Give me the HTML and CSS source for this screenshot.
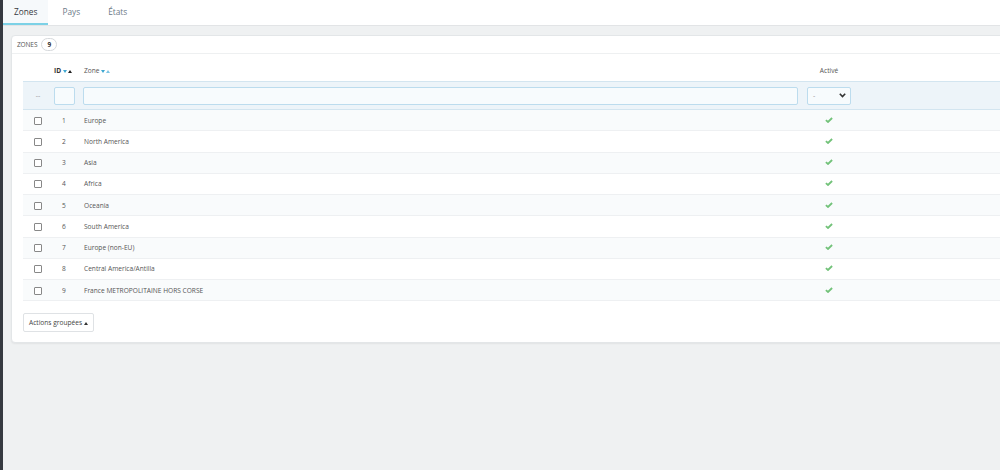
FILE: index.html
```html
<!DOCTYPE html>
<html lang="fr">
    <head>
        <meta charset="UTF-8">
        <meta name="viewport" content="width=device-width, initial-scale=1.0">
        <title>Zones</title>
        <link rel="stylesheet" href="styles.css">
    </head>
<body>
    <div class="sidebar-edge"></div>
    <div class="main">
        <nav class="tabs">
            <a class="tab active">Zones</a>
            <a class="tab">Pays</a>
            <a class="tab">États</a>
        </nav>

        <div class="content">
            <div class="panel">
                <div class="panel-heading">
                    ZONES <span class="badge">9</span>
                </div>

                <table class="list">
                    <colgroup>
                        <col class="w-check">
                        <col class="w-id">
                        <col class="w-zone">
                        <col class="w-active">
                        <col class="w-rest">
                    </colgroup>
                    <thead>
                        <tr class="titles">
                            <th></th>
                            <th class="col-id">ID <span class="sort"><i class="down"></i><i class="up dark"></i></span></th>
                            <th class="col-zone">Zone <span class="sort"><i class="down"></i><i class="up"></i></span></th>
                            <th class="col-active">Activé</th>
                            <th></th>
                        </tr>
                        <tr class="filters">
                            <th class="col-check dash">--</th>
                            <th class="col-id"><input type="text" class="filter small"></th>
                            <th class="col-zone"><input type="text" class="filter"></th>
                            <th class="col-active">
                                <div class="select">-
                                    <svg width="7" height="5" viewBox="0 0 7 5"><path d="M0.8 0.8 L3.5 3.6 L6.2 0.8" fill="none" stroke="#333" stroke-width="1.6"/></svg>
                                </div>
                            </th>
                            <th></th>
                        </tr>
                    </thead>
                    <tbody id="rows"></tbody>
                </table>

                <button class="bulk">Actions groupées <span class="caret"></span></button>
            </div>
        </div>
    </div>

    <script>
        const zones = [
            'Europe', 'North America', 'Asia', 'Africa', 'Oceania',
            'South America', 'Europe (non-EU)', 'Central America/Antilla',
            'France METROPOLITAINE HORS CORSE'
        ];
        const tbody = document.getElementById('rows');

        zones.forEach(function (name, i) {
            const row = document.createElement('tr');
            row.innerHTML = `
                <td class="col-check"><span class="box"></span></td>
                <td class="col-id">${i + 1}</td>
                <td class="col-zone">${name}</td>
                <td class="col-active">
                    <svg width="8" height="6" viewBox="0 0 8 6"><path d="M0.9 3.1 L3 5 L7.1 1" fill="none" stroke="#72c279" stroke-width="1.8"/></svg>
                </td>
                <td></td>
            `;
            tbody.appendChild(row);
        });
    </script>
</body>
</html>
```

FILE: styles.css
```css
body {
    margin: 0;
    font-family: 'Open Sans', sans-serif;
    background-color: #eff1f2;
    color: #555;
    display: flex;
    height: 470px;
    overflow: hidden;
}

.sidebar-edge {
    width: 3px;
    background-color: #363a41;
    flex-shrink: 0;
}

.main {
    flex: 1;
    min-width: 0;
    overflow: hidden;
}

/* tab bar */
.tabs {
    display: flex;
    height: 26px;
    background-color: #fff;
    border-bottom: 1px solid #e2e4e6;
    box-sizing: border-box;
}

.tab {
    display: flex;
    align-items: center;
    padding: 0 11px;
    font-size: 8.3px;
    color: #6c7a87;
    border-bottom: 2px solid transparent;
    margin-right: 6px;
}

.tab.active {
    color: #363a41;
    background-color: #f6f9fb;
    border-bottom-color: #7cd1e6;
    margin-right: 3px;
}

.content {
    padding: 9px 0 0 8px;
}

/* panel */
.panel {
    width: 1080px;
    background-color: #fff;
    border: 1px solid #e3e6e8;
    border-radius: 4px;
    box-shadow: 0 1px 2px rgba(0, 0, 0, 0.06);
    padding: 0 11px 10px;
    box-sizing: border-box;
}

.panel-heading {
    height: 17px;
    display: flex;
    align-items: center;
    gap: 4px;
    font-size: 6.5px;
    letter-spacing: -0.1px;
    color: #555;
    border-bottom: 1px solid #eef0f1;
    margin: 0 -11px 0;
    padding: 0 5px;
}

.badge {
    display: inline-flex;
    align-items: center;
    justify-content: center;
    width: 14px;
    height: 11px;
    border: 1px solid #d6d9dc;
    border-radius: 7px;
    font-weight: bold;
    font-size: 6.5px;
    color: #333;
}

/* table */
.list {
    width: 100%;
    table-layout: fixed;
    border-collapse: collapse;
    margin-top: 10px;
    font-size: 6.6px;
    color: #555;
}

.w-check { width: 28px; }
.w-id { width: 30px; }
.w-zone { width: 724px; }
.w-active { width: 48px; }

.list th,
.list td {
    padding: 0;
    font-weight: normal;
    text-align: left;
}

.titles th {
    height: 15px;
    padding-top: 2px;
    vertical-align: top;
    color: #555;
}

.col-check {
    text-align: center !important;
    padding-left: 2px !important;
}

.titles .col-id,
.titles .col-zone,
.filters .col-id,
.list tbody .col-zone {
    padding-left: 3px;
}

.filters .col-zone,
.filters .col-active {
    padding-left: 2px;
}

.col-active {
    text-align: center !important;
}

.titles .col-id {
    font-weight: bold;
    color: #333;
}

.sort {
    display: inline-flex;
    gap: 1px;
    vertical-align: middle;
}

.sort i {
    width: 0;
    height: 0;
    border-left: 2.5px solid transparent;
    border-right: 2.5px solid transparent;
}

.sort .down {
    border-top: 3px solid #3ea7d1;
}

.sort .up {
    border-bottom: 3px solid #7fc4e4;
}

.sort .up.dark {
    border-bottom-color: #222;
}

.filters th {
    height: 27px;
    background-color: #edf4f9;
    border-top: 1px solid #d3e5f0;
    border-bottom: 1px solid #d3e5f0;
    vertical-align: middle;
}

.dash {
    color: #999;
    font-size: 7px;
}

.filter {
    display: block;
    width: 715px;
    height: 18px;
    box-sizing: border-box;
    border: 1px solid #bcdcee;
    border-radius: 2px;
    background-color: #f7fbfd;
}

.filter.small {
    width: 21px;
}

.select {
    display: flex;
    align-items: center;
    justify-content: space-between;
    width: 44px;
    height: 18px;
    box-sizing: border-box;
    border: 1px solid #bcdcee;
    border-radius: 2px;
    background-color: #f7fbfd;
    padding: 0 4px 0 5px;
    color: #999;
    font-size: 7px;
}

.list tbody td {
    height: 20.25px;
    border-bottom: 1px solid #eef0f2;
    vertical-align: middle;
    color: #555;
}

.list tbody tr:nth-child(odd) td {
    background-color: #f9fbfc;
}

.list tbody .col-id {
    text-align: center;
    padding-right: 4px;
}

.box {
    display: inline-block;
    width: 6px;
    height: 6px;
    border: 1px solid #888;
    border-radius: 1px;
    background-color: #fff;
    vertical-align: middle;
}

.bulk {
    margin-top: 12px;
    height: 19px;
    padding: 0 5px;
    font-family: 'Open Sans', sans-serif;
    font-size: 6.6px;
    color: #444;
    background-color: #fff;
    border: 1px solid #dfe2e5;
    border-radius: 2px;
}

.caret {
    display: inline-block;
    width: 0;
    height: 0;
    border-left: 2px solid transparent;
    border-right: 2px solid transparent;
    border-bottom: 3px solid #333;
    vertical-align: middle;
}
```
